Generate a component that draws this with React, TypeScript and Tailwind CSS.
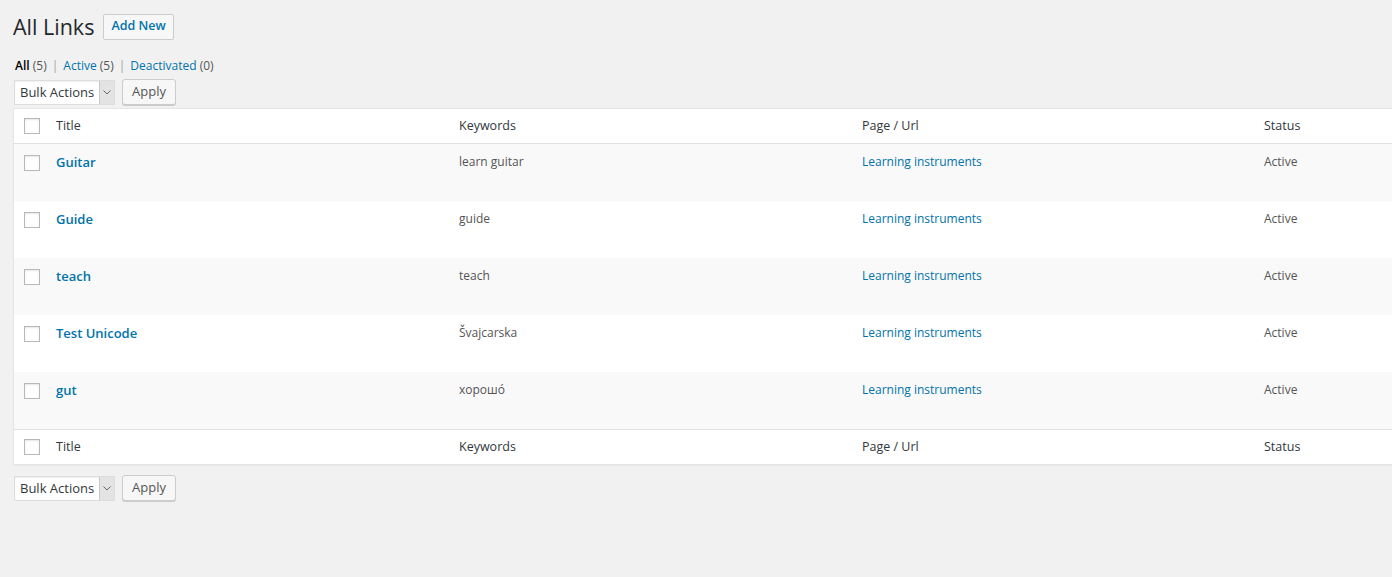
import React from 'react';

const rows = [
  { title: 'Guitar', keywords: 'learn guitar' },
  { title: 'Guide', keywords: 'guide' },
  { title: 'teach', keywords: 'teach' },
  { title: 'Test Unicode', keywords: 'Švajcarska' },
  { title: 'gut', keywords: 'хорошо́' },
];

const font = { fontFamily: '"Open Sans", "Noto Sans", sans-serif' };

const Checkbox: React.FC = () => (
  <span className="block w-4 h-4 bg-white border border-[#b4b9be] shadow-[inset_0_1px_2px_rgba(0,0,0,0.1)]"></span>
);

const BulkBar: React.FC = () => (
  <div className="flex items-center gap-[7px]">
    <div className="flex h-[25px] w-[101px] bg-white border border-[#ddd] shadow-[inset_0_1px_2px_rgba(0,0,0,0.07)]">
      <span className="flex-1 pl-[5px] text-[13px] leading-[23px] text-[#32373c]">Bulk Actions</span>
      <span className="w-[15px] h-full bg-[#e3e3e3] border-l border-[#c8c8c8] flex items-center justify-center">
        <svg width="8" height="5" viewBox="0 0 8 5">
          <path d="M0.5 0.5 L4 4 L7.5 0.5" fill="none" stroke="#666" strokeWidth="1" />
        </svg>
      </span>
    </div>
    <button className="h-[26px] px-[9px] text-[13px] text-[#555] bg-[#f7f7f7] border border-[#ccc] rounded-[3px] shadow-[0_1px_0_#ccc]">
      Apply
    </button>
  </div>
);

const HeadRow: React.FC<{ top?: boolean }> = ({ top }) => (
  <div className={`grid grid-cols-[32px_403px_403px_402px_403px] h-[35px] items-center text-[12.5px] text-[#32373c] bg-white ${top ? 'border-b border-[#e1e1e1]' : 'border-t border-[#e1e1e1]'}`}>
    <div className="pl-[10px]"><Checkbox /></div>
    <div className="pl-[10px]">Title</div>
    <div className="pl-[10px]">Keywords</div>
    <div className="pl-[10px]">Page / Url</div>
    <div className="pl-[10px]">Status</div>
  </div>
);

export default function App() {
  return (
    <div className="min-h-[577px] w-[1392px] overflow-hidden bg-[#f1f1f1]" style={font}>
      <div className="pl-[13px] pt-[12px]">
        <div className="flex items-center gap-[9px]">
          <h1 className="text-[21.5px] leading-[29px] text-[#23282d]">All Links</h1>
          <button className="h-[26px] px-[7px] text-[12.5px] font-semibold text-[#0073aa] bg-[#f7f7f7] border border-[#ccc] rounded-[2px]">
            Add New
          </button>
        </div>
        <div className="mt-[17px] pl-[2px] text-[12px] text-[#555] leading-[16px]">
          <span className="text-black font-semibold">All</span> <span className="text-[#555]">(5)</span>
          <span className="mx-[5px] text-[#a0a5aa]">|</span>
          <span className="text-[#0073aa]">Active</span> (5)
          <span className="mx-[5px] text-[#a0a5aa]">|</span>
          <span className="text-[#0073aa]">Deactivated</span> (0)
        </div>
        <div className="mt-[5px] pl-[1px]">
          <BulkBar />
        </div>
        <div className="mt-[3px] w-[1643px] bg-white border border-[#e5e5e5] shadow-[0_1px_1px_rgba(0,0,0,0.04)]">
          <HeadRow top />
          {rows.map((r, i) => (
            <div
              key={r.title}
              className={`grid grid-cols-[32px_403px_403px_402px_403px] h-[57px] text-[13px] pt-[9px] ${i % 2 === 0 ? 'bg-[#f9f9f9]' : 'bg-white'}`}
            >
              <div className="pl-[10px] pt-[2px]"><Checkbox /></div>
              <div className="pl-[10px] font-semibold text-[#0073aa] text-[13px] leading-[18px]">{r.title}</div>
              <div className="pl-[10px] text-[#555] text-[12px] leading-[18px]">{r.keywords}</div>
              <div className="pl-[10px] text-[#0073aa] text-[12px] leading-[18px]">Learning instruments</div>
              <div className="pl-[10px] text-[#555] text-[12px] leading-[18px]">Active</div>
            </div>
          ))}
          <HeadRow />
        </div>
        <div className="mt-[10px] pl-[1px]">
          <BulkBar />
        </div>
      </div>
    </div>
  );
}
